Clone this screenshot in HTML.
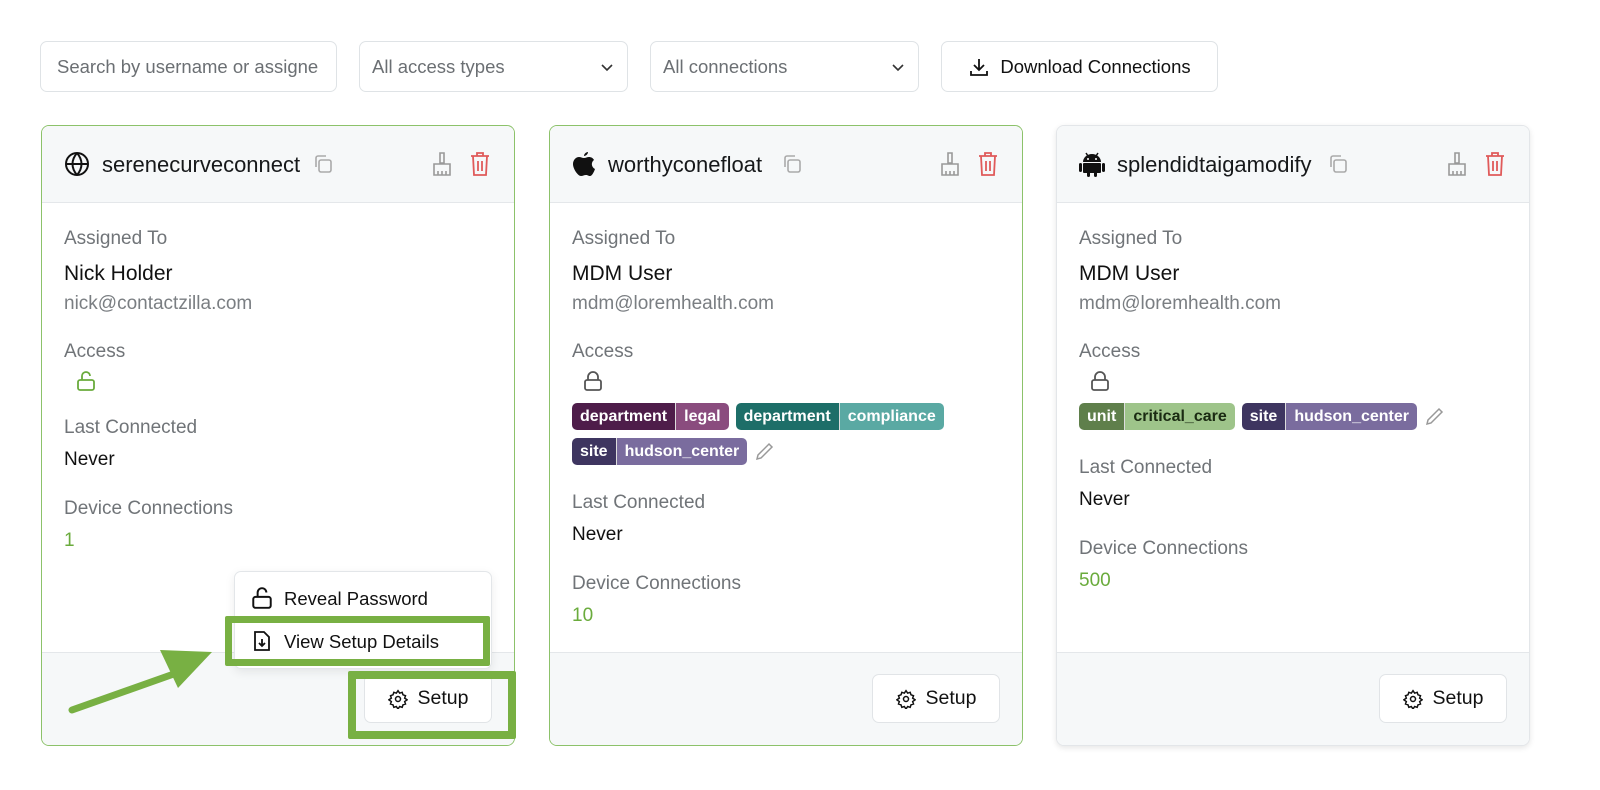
<!DOCTYPE html>
<html><head><meta charset="utf-8"><style>
*{box-sizing:border-box;margin:0;padding:0}
body{width:1600px;height:790px;background:#fff;font-family:"Liberation Sans",sans-serif;position:relative;overflow:hidden;color:#111}
.abs{position:absolute}
.inp{position:absolute;top:41px;height:51px;border:1px solid #dfe3e6;border-radius:7px;font-size:18.5px;color:#6b6f73;display:flex;align-items:center;padding:0 16px}
.card{position:absolute;top:125px;width:474px;height:621px;border:1.5px solid #8cc26a;border-radius:8px;overflow:hidden;background:#fff}
.hdr{position:absolute;left:0;top:0;right:0;height:77px;background:#f6f8f9;border-bottom:1px solid #e4e7ea}
.ftr{position:absolute;left:0;bottom:0;right:0;height:93px;background:#f6f8f9;border-top:1px solid #e4e7ea}
.title{position:absolute;left:60px;top:26px;font-size:22px;color:#16181a}
.lbl{position:absolute;left:22px;font-size:19px;color:#707478}
.val{position:absolute;left:22px;font-size:19px;color:#111}
.big{font-size:21px}
.mail{position:absolute;left:22px;font-size:19px;color:#7a7e82}
.grn{color:#6aab3c}
.btn{position:absolute;right:22px;bottom:22px;width:128px;height:49px;background:#fff;border:1px solid #e1e4e7;border-radius:7px;font-size:19.5px;display:flex;align-items:center;justify-content:center;gap:10px}
.tag{display:inline-flex;border-radius:5px;overflow:hidden;font-size:16px;font-weight:bold;color:#fff;height:27px;line-height:27px;margin-right:7px}
.tag span{padding:0 8px}
</style></head><body>
<div class="inp" style="left:40px;width:297px">Search by username or assigne</div>
<div class="inp" style="left:359px;width:269px;justify-content:space-between;padding:0 12px">All access types<svg width="16" height="16" viewBox="0 0 16 16"><path d="M3 6l5 5 5-5" fill="none" stroke="#333" stroke-width="1.6"/></svg></div>
<div class="inp" style="left:650px;width:269px;justify-content:space-between;padding:0 12px">All connections<svg width="16" height="16" viewBox="0 0 16 16"><path d="M3 6l5 5 5-5" fill="none" stroke="#333" stroke-width="1.6"/></svg></div>
<div class="inp" style="left:941px;width:277px;color:#111;gap:10px;justify-content:center"><svg width="22" height="22" viewBox="0 0 22 22" fill="none" stroke="#111" stroke-width="1.8"><path d="M11 3v11M6 9l5 5 5-5M3 15v4h16v-4"/></svg>Download Connections</div>

<!-- card 1 -->
<div class="card" style="left:41px">
<div class="hdr">
<svg class="abs" style="left:22px;top:25px" width="26" height="26" viewBox="0 0 26 26" fill="none" stroke="#111" stroke-width="2"><circle cx="13" cy="13" r="11"/><path d="M2 13h22M13 2c-6 7-6 15 0 22M13 2c6 7 6 15 0 22"/></svg>
<div class="title">serenecurveconnect</div>
<svg class="abs" style="left:270px;top:27px" width="22" height="22" viewBox="0 0 22 22" fill="none" stroke="#aaa" stroke-width="1.6"><rect x="7" y="7" width="12" height="12" rx="2"/><path d="M4 14V5a2 2 0 0 1 2-2h8"/></svg>
<svg class="abs" style="left:388px;top:25px" width="24" height="26" viewBox="0 0 24 26" fill="none" stroke="#999" stroke-width="1.6"><path d="M10 2h4v10h-4zM4 13h16v11H4zM8 20v4M12 20v4M16 20v4"/></svg>
<svg class="abs" style="left:427px;top:25px" width="22" height="26" viewBox="0 0 22 26" fill="none" stroke="#e05a5a" stroke-width="1.8"><path d="M2 5h18M8 5V2h6v3M4 5l1 19h12l1-19M9 10v10M13 10v10"/></svg>
</div>
<div class="lbl" style="top:102px">Assigned To</div>
<div class="val big" style="top:136px">Nick Holder</div>
<div class="mail" style="top:167px">nick@contactzilla.com</div>
<div class="lbl" style="top:215px">Access</div>
<svg class="abs" style="left:33px;top:244px" width="22" height="22" viewBox="0 0 22 22" fill="none" stroke="#6aab3c" stroke-width="1.8"><rect x="3" y="10" width="16" height="10" rx="2"/><path d="M7 10V6a4 4 0 0 1 8 0"/></svg>
<div class="lbl" style="top:291px">Last Connected</div>
<div class="val" style="top:323px">Never</div>
<div class="lbl" style="top:372px">Device Connections</div>
<div class="val grn" style="top:404px">1</div>
<div class="ftr"></div>
<div class="btn"><svg width="20" height="20" viewBox="0 0 24 24" fill="none" stroke="#111" stroke-width="1.8"><circle cx="12" cy="12" r="3"/><path d="M12 2l2 3 3-1 1 3 3 1-1 3 3 2-3 2 1 3-3 1-1 3-3-1-2 3-2-3-3 1-1-3-3-1 1-3-3-2 3-2-1-3 3-1 1-3 3 1z"/></svg>Setup</div>
</div>

<!-- menu -->
<div class="abs" style="left:234px;top:571px;width:258px;height:98px;background:#fff;border:1px solid #e3e6e9;border-radius:7px;box-shadow:0 3px 10px rgba(0,0,0,.08)"></div>
<svg class="abs" style="left:250px;top:586px" width="24" height="24" viewBox="0 0 22 22" fill="none" stroke="#111" stroke-width="1.8"><rect x="3" y="10" width="16" height="10" rx="2"/><path d="M7 10V6a4 4 0 0 1 8 0"/></svg>
<div class="abs" style="left:284px;top:588px;font-size:18.5px">Reveal Password</div>
<svg class="abs" style="left:252px;top:630px" width="20" height="22" viewBox="0 0 20 22" fill="none" stroke="#111" stroke-width="1.8"><path d="M3 2h9l5 5v13H3zM10 9v7M7 13l3 3 3-3"/></svg>
<div class="abs" style="left:284px;top:631px;font-size:18.5px">View Setup Details</div>
<div class="abs" style="left:225px;top:616px;width:265px;height:50px;border:7px solid #78b043;border-radius:2px"></div>
<div class="abs" style="left:348px;top:671px;width:168px;height:68px;border:8px solid #78b043;border-radius:2px"></div>
<svg class="abs" style="left:60px;top:640px" width="160" height="80" viewBox="0 0 160 80"><path d="M12 70L125 30" stroke="#78b043" stroke-width="7" stroke-linecap="round"/><path d="M152 12L100 10 118 48z" fill="#78b043"/></svg>

<!-- card 2 -->
<div class="card" style="left:549px">
<div class="hdr">
<svg class="abs" style="left:22px;top:24px" width="24" height="28" viewBox="0 0 24 28"><path fill="#111" d="M16 2c0 2-2 4-4 4 0-2 2-4 4-4zM12 8c2 0 3-1 5-1 2 0 4 1 5 3-3 2-3 7 1 9-1 3-3 7-5 7-2 0-2-1-4-1s-3 1-5 1C6 26 1 19 1 14c0-4 3-7 6-7 2 0 3 1 5 1z"/></svg>
<div class="title" style="left:58px">worthyconefloat</div>
<svg class="abs" style="left:231px;top:27px" width="22" height="22" viewBox="0 0 22 22" fill="none" stroke="#aaa" stroke-width="1.6"><rect x="7" y="7" width="12" height="12" rx="2"/><path d="M4 14V5a2 2 0 0 1 2-2h8"/></svg>
<svg class="abs" style="left:388px;top:25px" width="24" height="26" viewBox="0 0 24 26" fill="none" stroke="#999" stroke-width="1.6"><path d="M10 2h4v10h-4zM4 13h16v11H4zM8 20v4M12 20v4M16 20v4"/></svg>
<svg class="abs" style="left:427px;top:25px" width="22" height="26" viewBox="0 0 22 26" fill="none" stroke="#e05a5a" stroke-width="1.8"><path d="M2 5h18M8 5V2h6v3M4 5l1 19h12l1-19M9 10v10M13 10v10"/></svg>
</div>
<div class="lbl" style="top:102px">Assigned To</div>
<div class="val big" style="top:136px">MDM User</div>
<div class="mail" style="top:167px">mdm@loremhealth.com</div>
<div class="lbl" style="top:215px">Access</div>
<svg class="abs" style="left:32px;top:244px" width="22" height="22" viewBox="0 0 22 22" fill="none" stroke="#555" stroke-width="1.8"><rect x="3" y="10" width="16" height="10" rx="2"/><path d="M6 10V7a5 5 0 0 1 10 0v3"/></svg>
<div class="abs" style="left:22px;top:277px;width:440px">
<div class="tag"><span style="background:#4e1d4a">department</span><span style="background:#8a4c7e;border-left:1px solid #ddd">legal</span></div><div class="tag"><span style="background:#1d6e68">department</span><span style="background:#5aa9a3;border-left:1px solid #ddd">compliance</span></div>
<div style="height:8px"></div>
<div class="tag"><span style="background:#3e3560">site</span><span style="background:#7a6c9e;border-left:1px solid #ddd">hudson_center</span></div><svg width="22" height="22" viewBox="0 0 22 22" fill="none" stroke="#999" stroke-width="1.5" style="vertical-align:top;margin-top:2px"><path d="M3 19l1-4L15 4l3 3L7 18z"/></svg>
</div>
<div class="lbl" style="top:366px">Last Connected</div>
<div class="val" style="top:398px">Never</div>
<div class="lbl" style="top:447px">Device Connections</div>
<div class="val grn" style="top:479px">10</div>
<div class="ftr"></div>
<div class="btn"><svg width="20" height="20" viewBox="0 0 24 24" fill="none" stroke="#111" stroke-width="1.8"><circle cx="12" cy="12" r="3"/><path d="M12 2l2 3 3-1 1 3 3 1-1 3 3 2-3 2 1 3-3 1-1 3-3-1-2 3-2-3-3 1-1-3-3-1 1-3-3-2 3-2-1-3 3-1 1-3 3 1z"/></svg>Setup</div>
</div>

<!-- card 3 -->
<div class="card" style="left:1056px;border-color:#e3e6e9;box-shadow:0 2px 6px rgba(0,0,0,.1)">
<div class="hdr">
<svg class="abs" style="left:22px;top:25px" width="26" height="27" viewBox="0 0 26 27" fill="#111"><path d="M4 11a9 8 0 0 1 18 0z"/><path d="M7 2l2 3M19 2l-2 3" stroke="#111" stroke-width="1.5"/><rect x="4" y="12" width="18" height="10" rx="1"/><rect x="0" y="12" width="3" height="9" rx="1.5"/><rect x="23" y="12" width="3" height="9" rx="1.5"/><rect x="8" y="20" width="3" height="6" rx="1.5"/><rect x="15" y="20" width="3" height="6" rx="1.5"/><circle cx="9" cy="8" r="1" fill="#fff"/><circle cx="17" cy="8" r="1" fill="#fff"/></svg>
<div class="title">splendidtaigamodify</div>
<svg class="abs" style="left:270px;top:27px" width="22" height="22" viewBox="0 0 22 22" fill="none" stroke="#aaa" stroke-width="1.6"><rect x="7" y="7" width="12" height="12" rx="2"/><path d="M4 14V5a2 2 0 0 1 2-2h8"/></svg>
<svg class="abs" style="left:388px;top:25px" width="24" height="26" viewBox="0 0 24 26" fill="none" stroke="#999" stroke-width="1.6"><path d="M10 2h4v10h-4zM4 13h16v11H4zM8 20v4M12 20v4M16 20v4"/></svg>
<svg class="abs" style="left:427px;top:25px" width="22" height="26" viewBox="0 0 22 26" fill="none" stroke="#e05a5a" stroke-width="1.8"><path d="M2 5h18M8 5V2h6v3M4 5l1 19h12l1-19M9 10v10M13 10v10"/></svg>
</div>
<div class="lbl" style="top:102px">Assigned To</div>
<div class="val big" style="top:136px">MDM User</div>
<div class="mail" style="top:167px">mdm@loremhealth.com</div>
<div class="lbl" style="top:215px">Access</div>
<svg class="abs" style="left:32px;top:244px" width="22" height="22" viewBox="0 0 22 22" fill="none" stroke="#555" stroke-width="1.8"><rect x="3" y="10" width="16" height="10" rx="2"/><path d="M6 10V7a5 5 0 0 1 10 0v3"/></svg>
<div class="abs" style="left:22px;top:277px;width:440px">
<div class="tag"><span style="background:#5f7f4b">unit</span><span style="background:#9ec48a;color:#1a2a12;border-left:1px solid #ddd">critical_care</span></div><div class="tag"><span style="background:#3e3560">site</span><span style="background:#7a6c9e;border-left:1px solid #ddd">hudson_center</span></div><svg width="22" height="22" viewBox="0 0 22 22" fill="none" stroke="#999" stroke-width="1.5" style="vertical-align:top;margin-top:2px"><path d="M3 19l1-4L15 4l3 3L7 18z"/></svg>
</div>
<div class="lbl" style="top:331px">Last Connected</div>
<div class="val" style="top:363px">Never</div>
<div class="lbl" style="top:412px">Device Connections</div>
<div class="val grn" style="top:444px">500</div>
<div class="ftr"></div>
<div class="btn"><svg width="20" height="20" viewBox="0 0 24 24" fill="none" stroke="#111" stroke-width="1.8"><circle cx="12" cy="12" r="3"/><path d="M12 2l2 3 3-1 1 3 3 1-1 3 3 2-3 2 1 3-3 1-1 3-3-1-2 3-2-3-3 1-1-3-3-1 1-3-3-2 3-2-1-3 3-1 1-3 3 1z"/></svg>Setup</div>
</div>
</body></html>
